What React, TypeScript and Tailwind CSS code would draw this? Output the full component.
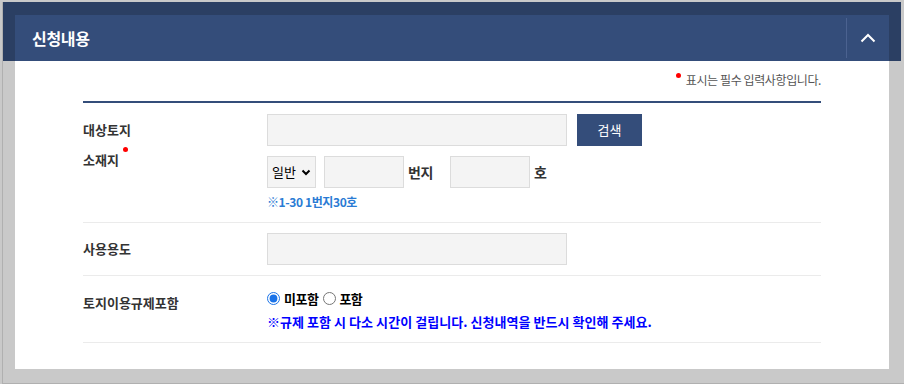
import React from "react";

const font = { fontFamily: '"Noto Sans CJK KR", "Noto Sans", sans-serif' };

const Field = ({ className = "" }: { className?: string }) => (
  <input
    type="text"
    className={`h-[32px] border border-[#dcdcdc] bg-[#f4f4f4] outline-none ${className}`}
  />
);

const App = () => {
  return (
    <div
      className="h-[384px] w-[904px] overflow-hidden bg-[#c9c9c9] pl-[2px] pt-[2px] text-[#333]"
      style={font}
    >
      <div className="h-[382px] border-b border-l border-[#b0b0b0]">
        <div className="mr-[3px] bg-[#2b3f63] pl-[12px] pr-[12px] pt-[13px]">
          <div className="flex h-[46px] items-center justify-between bg-[#344d7a]">
            <h2 className="pl-[17px] text-[16px] font-bold tracking-[-0.3px] text-white">
              신청내용
            </h2>
            <div className="flex h-[40px] items-center border-l border-[#4b6290]">
              <button className="flex h-full w-[42px] items-center justify-center">
                <svg width="16" height="10" viewBox="0 0 16 10" fill="none">
                  <path d="M1.5 8.5 8 2l6.5 6.5" stroke="white" strokeWidth="2" />
                </svg>
              </button>
            </div>
          </div>
        </div>
        <div className="ml-[12px] mr-[15px] h-[308px] bg-white px-[68px]">
          <div className="flex h-[40px] items-start justify-end pt-[10px]">
            <span className="mr-[5px] mt-[2px] h-[5px] w-[5px] rounded-full bg-[#f00]" />
            <span className="text-[12px] tracking-[-0.4px] text-[#555]">
              표시는 필수 입력사항입니다.
            </span>
          </div>
          <div className="border-t-2 border-[#344d7a]">
            <div className="flex border-b border-[#ebebeb] pb-[11px] pt-[11px]">
              <div className="relative w-[184px] pt-[1px] text-[13px] font-bold leading-[30px]">
                <div>대상토지</div>
                <div>소재지</div>
                <span className="absolute left-[40px] top-[33px] h-[5px] w-[5px] rounded-full bg-[#f00]" />
              </div>
              <div className="flex flex-col">
                <div className="flex items-center gap-[10px]">
                  <Field className="w-[300px]" />
                  <button className="h-[32px] w-[65px] bg-[#344d7a] text-[13px] text-white">
                    검색
                  </button>
                </div>
                <div className="mt-[10px] flex items-center text-[14px] font-bold">
                  <div className="flex h-[32px] w-[49px] items-center justify-between border border-[#dcdcdc] bg-[#f4f4f4] px-[4px] text-[13px] font-normal text-black">
                    <span>일반</span>
                    <svg width="10" height="7" viewBox="0 0 10 7">
                      <path d="M1.5 1.5 5 5l3.5-3.5" stroke="black" strokeWidth="2" fill="none" />
                    </svg>
                  </div>
                  <Field className="ml-[8px] w-[80px]" />
                  <span className="ml-[4px] w-[42px] tracking-[-0.5px]">번지</span>
                  <Field className="w-[80px]" />
                  <span className="ml-[4px]">호</span>
                </div>
                <p className="mt-[5px] text-[12px] font-bold tracking-[-0.4px] text-[#2a7bd4]">
                  ※1-30 1번지30호
                </p>
              </div>
            </div>
            <div className="flex items-center border-b border-[#ebebeb] py-[10px]">
              <div className="w-[184px] text-[13px] font-bold">사용용도</div>
              <Field className="w-[300px]" />
            </div>
            <div className="flex border-b border-[#ebebeb] pb-[11px] pt-[13px]">
              <div className="w-[184px] pt-[4px] text-[13px] font-bold">
                토지이용규제포함
              </div>
              <div className="flex flex-col">
                <div className="flex items-center text-[13px] font-bold tracking-[-0.5px] text-black">
                  <label className="flex items-center">
                    <input
                      type="radio"
                      name="reg"
                      defaultChecked
                      className="m-0 h-[13px] w-[13px] accent-[#1a73e8]"
                    />
                    <span className="ml-[4px]">미포함</span>
                  </label>
                  <label className="ml-[5px] flex items-center">
                    <input type="radio" name="reg" className="m-0 h-[13px] w-[13px]" />
                    <span className="ml-[3px]">포함</span>
                  </label>
                </div>
                <p className="mt-[3px] text-[13px] font-bold tracking-[0.05px] text-[#0000ff]">
                  ※규제 포함 시 다소 시간이 걸립니다. 신청내역을 반드시 확인해 주세요.
                </p>
              </div>
            </div>
          </div>
        </div>
      </div>
    </div>
  );
};

export default App;
